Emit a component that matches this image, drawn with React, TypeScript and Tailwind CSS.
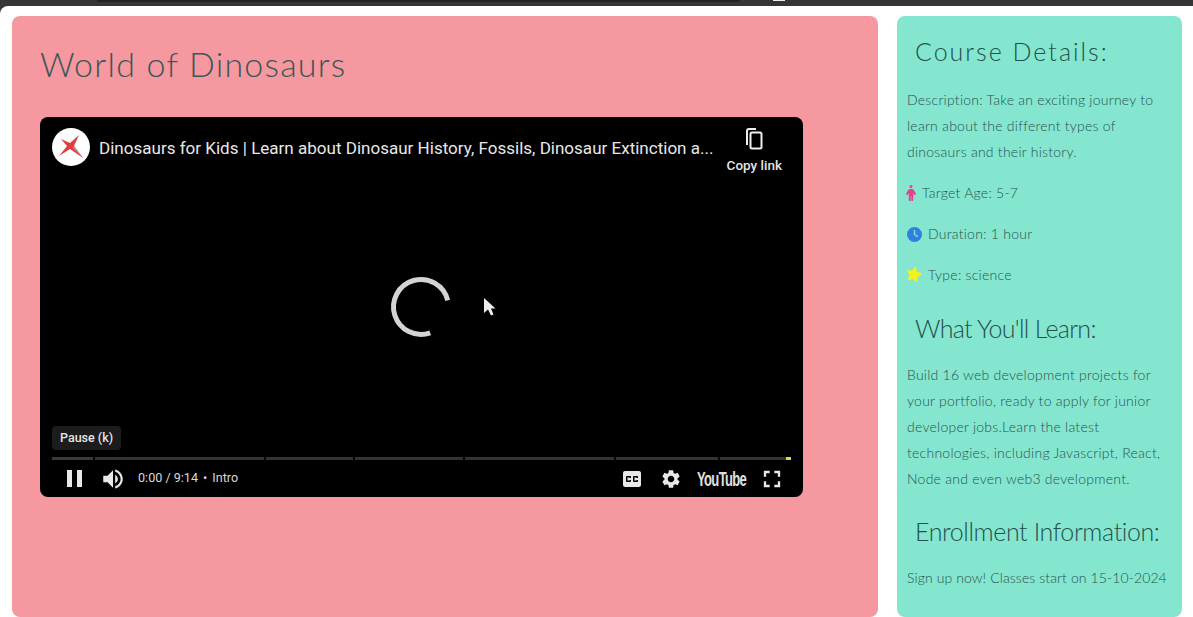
import React from "react";
import { FaPerson, FaClock, FaStar } from "react-icons/fa6";
import { MdSettings, MdVolumeUp, MdClosedCaption, MdFullscreen } from "react-icons/md";

// chapter segments of the progress bar
const chapters = ["w-[41px]", "w-[169px]", "w-[87px]", "w-[108px]", "w-[149px]", "w-[102px]"];

const ChannelLogo = () => (
  <div className="w-[38px] h-[38px] rounded-full bg-white flex items-center justify-center shrink-0">
    <svg width="26" height="26" viewBox="0 0 26 26">
      <path d="M3 5 L12 9 L21 1 L16 12 L25 24 L12 15 L1 22 L9 12 Z" fill="#e23d3d" />
      <path d="M16 12 L25 24 L15 14 Z" fill="#b58f8f" />
    </svg>
  </div>
);

const CopyIcon = () => (
  <svg width="24" height="24" viewBox="0 0 24 24" fill="none" stroke="#eeeeee" strokeWidth="2">
    <path d="M5 18 V4 Q5 2 7 2 H14" />
    <rect x="8.5" y="5.5" width="11" height="16" rx="1.5" />
  </svg>
);

const VideoPlayer = () => (
  <div className="relative w-[763px] h-[380px] bg-black rounded-lg flex flex-col justify-between shrink-0 font-['Roboto',sans-serif]">
    {/* top bar */}
    <div className="flex items-start justify-between pl-3 pr-[21px] pt-[11px]">
      <div className="flex items-center gap-[9px]">
        <ChannelLogo />
        <span className="text-[#e8e8e8] text-[17.05px] whitespace-nowrap relative top-[2px]">
          Dinosaurs for Kids | Learn about Dinosaur History, Fossils, Dinosaur Extinction a...
        </span>
      </div>
      <div className="flex flex-col items-center gap-[6px] -mt-[1px]">
        <CopyIcon />
        <span className="text-[#e4e4e4] text-[13.5px] font-medium leading-4 whitespace-nowrap">Copy link</span>
      </div>
    </div>

    {/* spinner */}
    <svg className="absolute left-[347px] top-[156px]" width="68" height="68" viewBox="0 0 68 68" fill="none">
      <path d="M60.7 27.3 A27.5 27.5 0 1 0 43.2 59.9" stroke="#d4d4d4" strokeWidth="5" />
    </svg>

    {/* cursor */}
    <svg className="absolute left-[443px] top-[180px]" width="14" height="20" viewBox="0 0 14 20">
      <path d="M1 1 V16 L5 12.5 L8 18.5 L10.5 17.5 L8 11.5 H12.5 Z" fill="#eeeeee" />
    </svg>

    {/* controls */}
    <div className="flex flex-col px-3">
      <div className="self-start bg-[#1c1c1c] text-[#e4e4e4] text-[12.5px] font-medium rounded px-2 h-6 flex items-center mb-[7px]">
        Pause (k)
      </div>
      <div className="flex gap-[2px] h-[3px]">
        {chapters.map((w, i) => (
          <div key={i} className={`${w} ${i === 0 ? "bg-[#3a3a3a]" : "bg-[#333333]"} h-full`} />
        ))}
        <div className="flex-1 flex h-full bg-[#333333] justify-end">
          <div className="w-[5px] bg-[#e6d44a]" />
        </div>
      </div>
      <div className="flex items-center h-[37px]">
        <div className="flex gap-[5px] ml-[15px]">
          <div className="w-[5px] h-[17px] bg-[#e8e8e8]" />
          <div className="w-[5px] h-[17px] bg-[#e8e8e8]" />
        </div>
        <MdVolumeUp className="text-[#e8e8e8] ml-[18px]" size={26} />
        <span className="text-[#d8d8d8] text-[12.6px] ml-3 whitespace-nowrap">0:00 / 9:14</span>
        <span className="text-[#d8d8d8] text-[12.6px] mx-[5px]">•</span>
        <span className="text-[#d8d8d8] text-[12.6px]">Intro</span>
        <div className="ml-auto flex items-center">
          <MdClosedCaption className="text-[#e8e8e8]" size={24} />
          <MdSettings className="text-[#e8e8e8] ml-[16px]" size={22} />
          <span className="text-[#e0e0e0] text-[20px] font-bold ml-[15px] w-[50px] whitespace-nowrap origin-left scale-x-[0.65] tracking-tighter font-['Liberation_Sans',sans-serif]">
            YouTube
          </span>
          <MdFullscreen className="text-[#e8e8e8] ml-[11px] mr-[5px]" size={28} />
        </div>
      </div>
    </div>
  </div>
);

const SideHeading = ({ children, className = "" }: any) => (
  <h2 className={`pl-2 text-[25px] leading-8 font-light whitespace-nowrap text-[#25504c] ${className}`}>
    {children}
  </h2>
);

const InfoRow = ({ icon, label, className = "" }: any) => (
  <div className={`flex items-center h-[26px] ${className}`}>
    {icon}
    <span>{label}</span>
  </div>
);

export default function App() {
  return (
    <div className="w-[1193px] h-[617px] overflow-hidden bg-white font-['Lato',sans-serif]">
      {/* browser chrome leftovers */}
      <div className="h-[6px] bg-[#353535] flex items-start pl-[97px]">
        <div className="w-[643px] h-[2px] bg-[#222222] rounded-b" />
        <div className="w-[12px] h-[1px] bg-[#eeeeee] ml-[33px]" />
      </div>

      <div className="h-[611px] bg-[#353535]">
        <div className="h-full bg-white rounded-tl-lg pt-[10px] pl-3 pr-[11px] flex gap-[19px]">
          {/* main panel */}
          <main className="w-[866px] h-[601px] bg-[#f6989f] rounded-lg pl-7 pt-[25px] flex flex-col">
            <h1 className="text-[34px] leading-[46px] font-light tracking-[1.2px] text-[#3e5558] mb-[30px]">
              World of Dinosaurs
            </h1>
            <VideoPlayer />
          </main>

          {/* sidebar */}
          <aside className="flex-1 h-[601px] bg-[#84e6cf] rounded-lg pl-[10px] pr-3 pt-[19px] text-[14px] font-light leading-[26px] tracking-[0.25px] text-[#28524e]">
            <SideHeading className="tracking-[2px]">Course Details:</SideHeading>
            <p className="mt-[20px]">
              Description: Take an exciting journey to learn about the different types of dinosaurs and their history.
            </p>
            <InfoRow
              className="mt-[15px]"
              icon={<FaPerson className="text-[#e83e8c] -ml-[4px] mr-[3px]" size={16} />}
              label="Target Age: 5-7"
            />
            <InfoRow
              className="mt-[15px]"
              icon={<FaClock className="text-[#2f80e0] mr-[6px]" size={15} />}
              label="Duration: 1 hour"
            />
            <InfoRow
              className="mt-[15px]"
              icon={<FaStar className="text-[#f2f21d] rotate-12 -ml-[1px] mr-[6px] -mt-[2px]" size={16} />}
              label="Type: science"
            />
            <SideHeading className="mt-[24px] tracking-[-0.7px]">What You'll Learn:</SideHeading>
            <p className="mt-[18px]">
              Build 16 web development projects for your portfolio, ready to apply for junior developer jobs.Learn the latest technologies, including Javascript, React, Node and even web3 development.
            </p>
            <SideHeading className="mt-[23px] tracking-[-0.4px]">Enrollment Information:</SideHeading>
            <p className="mt-[18px] whitespace-nowrap tracking-[0.1px]">Sign up now! Classes start on 15-10-2024</p>
          </aside>
        </div>
      </div>
    </div>
  );
}
